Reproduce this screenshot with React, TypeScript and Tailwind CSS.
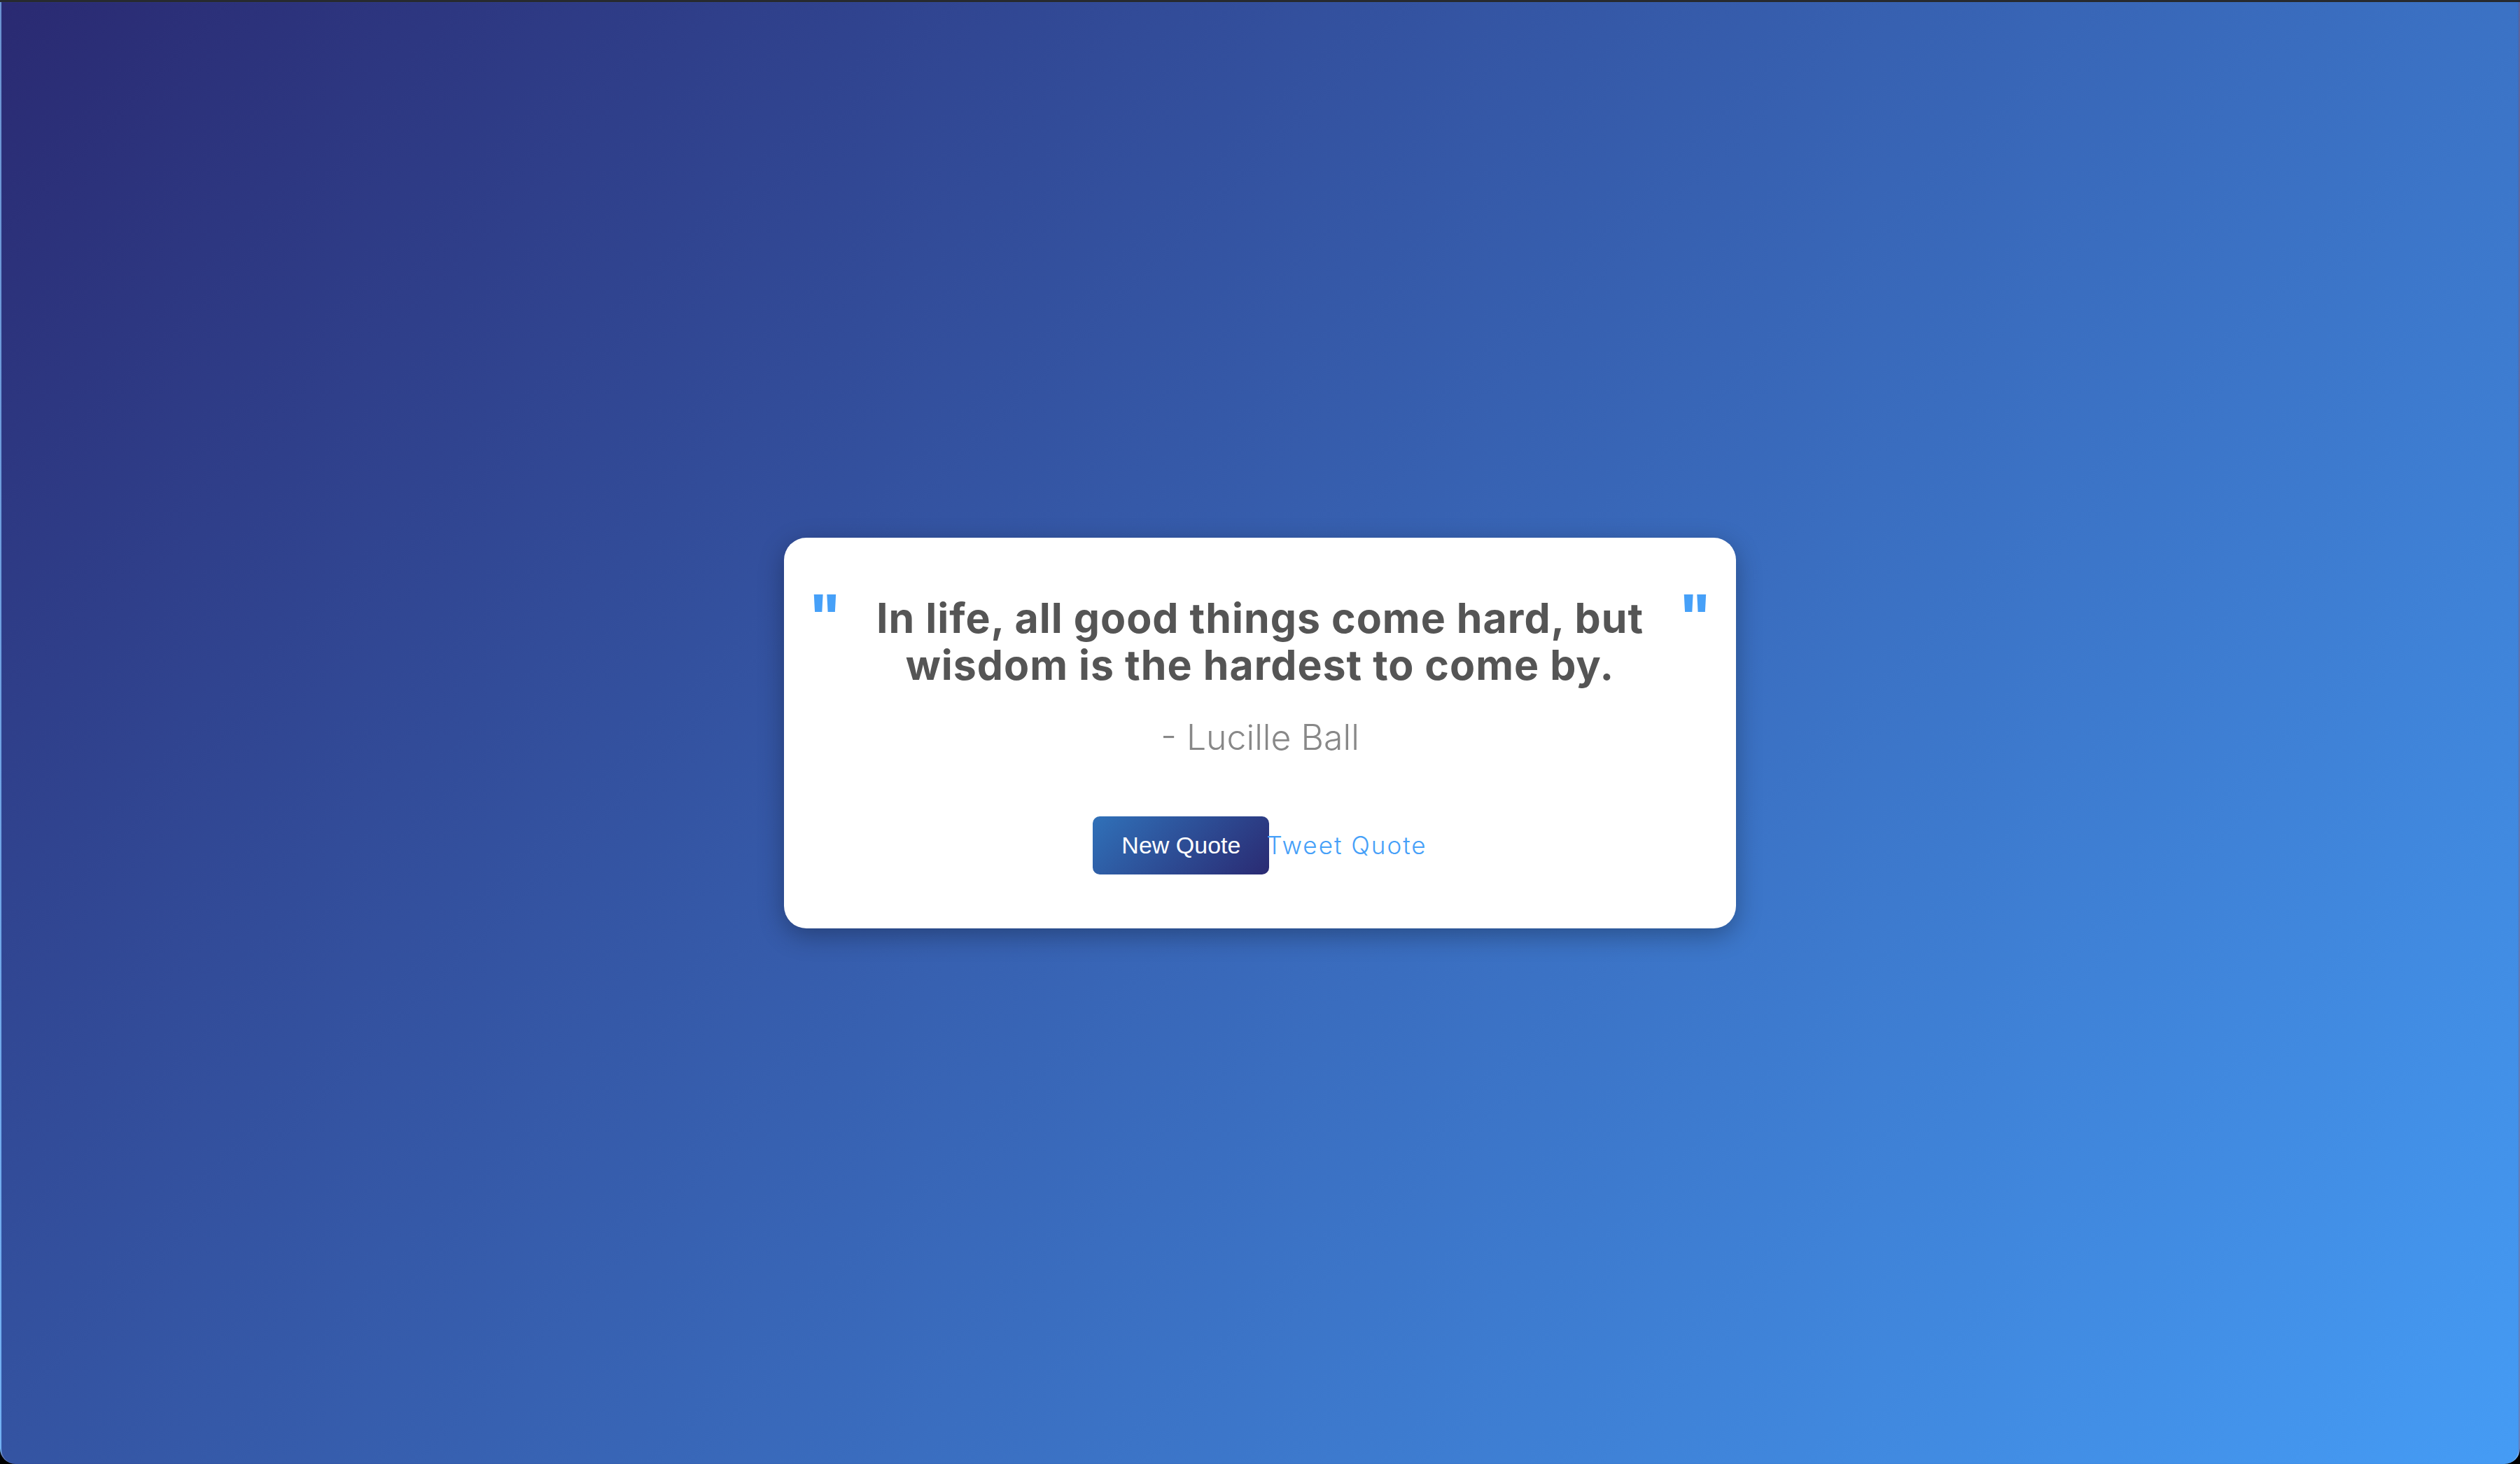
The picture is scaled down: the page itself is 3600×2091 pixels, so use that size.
const quote = {
  text: ["In life, all good things come hard, but", "wisdom is the hardest to come by."],
  author: "Lucille Ball",
};

const QuoteMark = ({ side }: { side: "left" | "right" }) => (
  <span
    className={`-mt-[11px] block font-['Inter',sans-serif] text-[80px] font-extrabold leading-none text-[#46a0f8] ${
      side === "left" ? "-ml-[8px]" : "-mr-[8px]"
    }`}
  >
    "
  </span>
);

export default function App() {
  return (
    <div className="min-h-screen bg-black">
      <div className="h-[3px] bg-[#272a2f]" />
      <div className="flex h-[2088px] items-center justify-center rounded-b-[22px] border-x-2 border-white/25 bg-[linear-gradient(135deg,#2a2a72,#459cf5)]">
        <div className="w-[1360px] rounded-[32px] bg-white px-[43px] pt-[81px] pb-[77px] shadow-[0_10px_36px_rgba(0,0,0,0.3)]">
          <div className="flex items-start justify-between">
            <QuoteMark side="left" />
            <p className="text-center font-['Inter',sans-serif] text-[59px] font-bold leading-[67px] tracking-[1px] text-[#555555]">
              {quote.text[0]}
              <br />
              {quote.text[1]}
            </p>
            <QuoteMark side="right" />
          </div>

          <p className="mt-[40px] text-center font-['Inter',sans-serif] text-[50px] font-light leading-[60px] text-[#888888]">
            - {quote.author}
          </p>

          <div className="mt-[83px] flex items-center justify-center">
            <button className="h-[83px] w-[252px] rounded-[10px] bg-[linear-gradient(135deg,#3071b9,#2a2a72)] font-['Liberation_Sans',Arial,sans-serif] text-[34px] text-white">
              New Quote
            </button>
            <a href="#" className="-ml-[4px] font-['Inter',sans-serif] text-[35px] font-light tracking-[2px] text-[#46a0f8]">
              Tweet Quote
            </a>
          </div>
        </div>
      </div>
    </div>
  );
}
